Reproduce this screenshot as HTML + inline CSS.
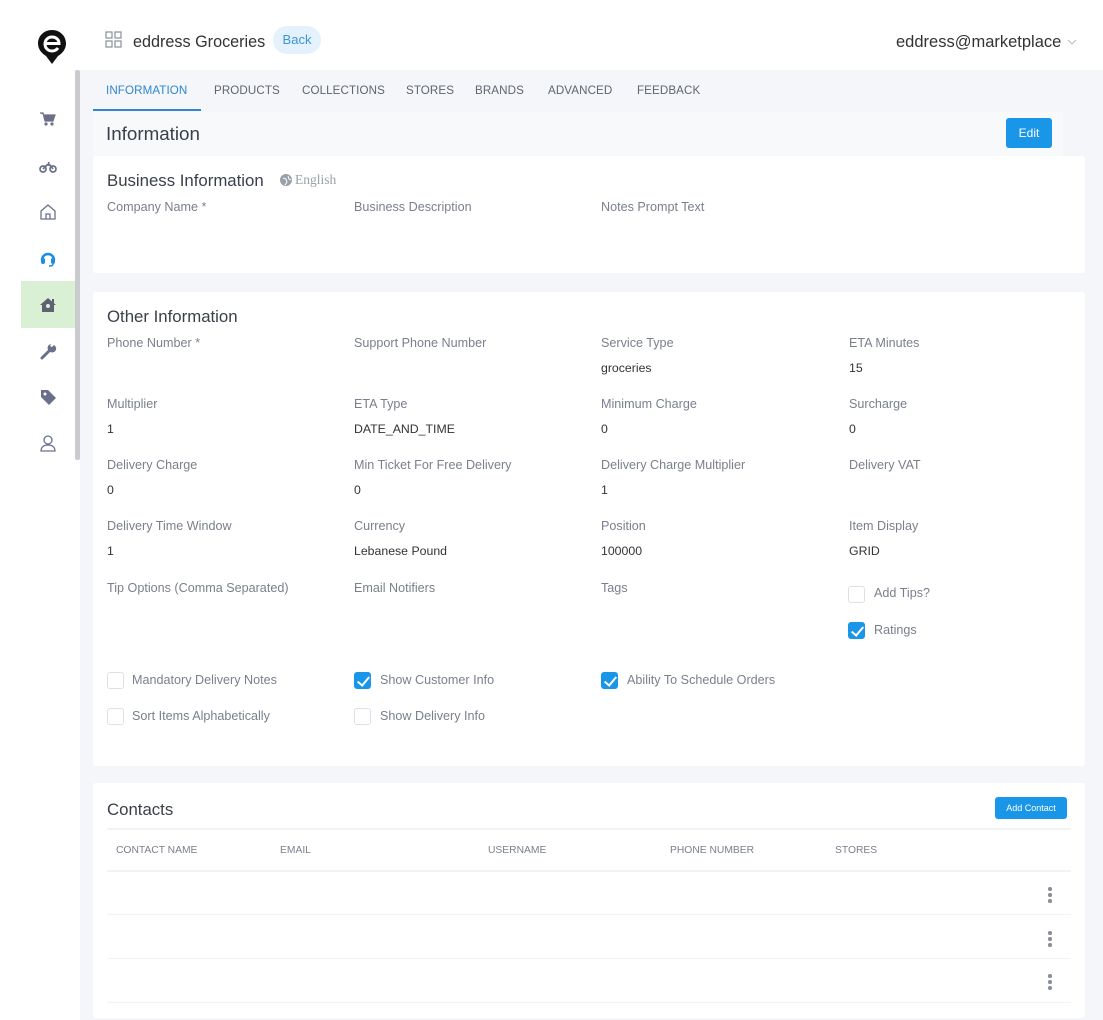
<!DOCTYPE html>
<html><head><meta charset="utf-8"><style>
*{box-sizing:border-box;margin:0;padding:0}
body{width:1103px;height:1020px;overflow:hidden;background:#f4f6f9;font-family:"Liberation Sans",sans-serif;position:relative;color:#333}
.a{position:absolute;white-space:nowrap}
.side{left:0;top:0;width:80px;height:1020px;background:#fff}
.hdr{left:80px;top:0;width:1023px;height:70px;background:#fff}
.tab{top:84px;font-size:11.6px;color:#5f6470;letter-spacing:.1px}
.card{background:#fff;border-radius:3px;left:93px;width:992px}
.lbl{font-size:12.6px;color:#7a7f8c}
.val{font-size:12.3px;color:#333}
.ttl{font-size:16.8px;color:#3a3f4a}
.cb{width:17px;height:17px;border:1px solid #dde1e7;border-radius:3px;background:#fff}
.cb.on{background:#1a96e8;border-color:#1a96e8}
.cb.on:after{content:"";position:absolute;left:5px;top:1px;width:5px;height:10px;border:solid #fff;border-width:0 2px 2px 0;transform:rotate(40deg)}
.th{font-size:10.3px;color:#7a7f8c;top:845px}
.line{height:2px;background:#f1f3f6;left:107px;width:964px}
.dots{left:1048px;width:4px}
.dots i{display:block;width:3.5px;height:3.5px;border-radius:50%;background:#8a8f9a;margin-bottom:2.5px}
.ic{left:38px;width:20px;height:20px}
</style></head><body>
<div class="a side"></div>
<div class="a" style="left:75px;top:70px;width:5px;height:390px;background:#c9cbcf;border-radius:2px"></div>
<svg class="a" style="left:37px;top:29px" width="30" height="36" viewBox="0 0 30 36"><path d="M15 1C7 1 1 7 1 14.5c0 6 4 10 8 12.5l6 8 6-8c4-2.5 8-6.5 8-12.5C29 7 23 1 15 1z" fill="#111"/><path d="M8 14.5h14c0-4-3-6.5-7-6.5s-7 3-7 7 3 7 7 7c2.5 0 4.5-1 6-3" stroke="#fff" stroke-width="3" fill="none"/></svg>
<div class="a" style="left:21px;top:281px;width:54px;height:47px;background:#d9f0d5"></div>
<svg class="a ic" style="top:109px" viewBox="0 0 20 20"><path d="M2 4h3l2 8h8l2-6H6" fill="#6a7089" stroke="#6a7089" stroke-width="1.2"/><circle cx="8" cy="15" r="1.6" fill="#6a7089"/><circle cx="14" cy="15" r="1.6" fill="#6a7089"/></svg>
<svg class="a ic" style="top:156px" viewBox="0 0 20 20"><circle cx="5" cy="13" r="3" stroke="#6a7089" stroke-width="1.7" fill="none"/><circle cx="15" cy="13" r="3" stroke="#6a7089" stroke-width="1.7" fill="none"/><path d="M5 13l4-4h3l3 4M10 9l1-3" stroke="#6a7089" stroke-width="1.7" fill="none"/></svg>
<svg class="a ic" style="top:202px" viewBox="0 0 20 20"><path d="M3 9l7-6 7 6v8H3z M8 17v-5h4v5" stroke="#6a7089" stroke-width="1.3" fill="none"/></svg>
<svg class="a ic" style="top:248px" viewBox="0 0 20 20"><path d="M4 12a6 6 0 0112 0" stroke="#1a8ee0" stroke-width="2.5" fill="none"/><rect x="3" y="10" width="4" height="6" rx="2" fill="#1a8ee0"/><rect x="13" y="10" width="4" height="6" rx="2" fill="#1a8ee0"/><path d="M15 16q0 2-4 2" stroke="#1a8ee0" stroke-width="1.5" fill="none"/></svg>
<svg class="a ic" style="top:295px" viewBox="0 0 20 20"><path d="M2 10l8-7 8 7h-2v7H4v-7z" fill="#5c6272"/><circle cx="10" cy="11" r="2" fill="#d9f0d5"/><rect x="14" y="4" width="2" height="4" fill="#5c6272"/></svg>
<svg class="a ic" style="top:341px" viewBox="0 0 20 20"><path d="M4 17l7-7" stroke="#6a7089" stroke-width="3" stroke-linecap="round"/><path d="M11 10a4 4 0 105-6l-2 2-2-1 1-2a4 4 0 00-2 7z" fill="#6a7089"/></svg>
<svg class="a ic" style="top:387px" viewBox="0 0 20 20"><path d="M3 3h7l8 8-7 7-8-8z" fill="#6a7089"/><circle cx="7" cy="7" r="1.5" fill="#fff"/></svg>
<svg class="a ic" style="top:433px" viewBox="0 0 20 20"><circle cx="10" cy="7" r="4" stroke="#6a7089" stroke-width="1.3" fill="none"/><path d="M3 18c0-4 3-6 7-6s7 2 7 6z" stroke="#6a7089" stroke-width="1.3" fill="none"/></svg>

<div class="a hdr"></div>
<svg class="a" style="left:105px;top:31px" width="17" height="17" viewBox="0 0 17 17"><g fill="none" stroke="#8a8f9a" stroke-width="1.2"><rect x="1" y="1" width="6" height="6"/><rect x="10" y="1" width="6" height="6"/><rect x="1" y="10" width="6" height="6"/><rect x="10" y="10" width="6" height="6"/></g></svg>
<div class="a" style="left:133px;top:33px;font-size:16.2px;color:#333">eddress Groceries</div>
<div class="a" style="left:273px;top:26px;width:48px;height:28px;border-radius:14px;background:#e3f2fc;color:#3b95d8;font-size:13px;text-align:center;line-height:28px">Back</div>
<div class="a" style="left:896px;top:33px;font-size:16.5px;color:#333">eddress@marketplace</div>
<svg class="a" style="left:1067px;top:39px" width="10" height="7"><path d="M1 1l4 4 4-4" stroke="#b8bcc4" fill="none"/></svg>

<div class="a tab" style="left:106px;color:#2f86cf">INFORMATION</div>
<div class="a" style="left:93px;top:109px;width:108px;height:2px;background:#2f86cf"></div>
<div class="a tab" style="left:214px">PRODUCTS</div>
<div class="a tab" style="left:302px">COLLECTIONS</div>
<div class="a tab" style="left:406px">STORES</div>
<div class="a tab" style="left:475px">BRANDS</div>
<div class="a tab" style="left:548px">ADVANCED</div>
<div class="a tab" style="left:637px">FEEDBACK</div>

<div class="a" style="left:93px;top:112px;width:970px;height:44px;background:#f8f9fb"></div>
<div class="a" style="left:106px;top:123px;font-size:18.8px;color:#3a3f4a">Information</div>
<div class="a" style="left:1006px;top:118px;width:46px;height:30px;background:#1a96e8;border-radius:3px;color:#fff;font-size:12px;text-align:center;line-height:30px">Edit</div>

<div class="a card" style="top:156px;height:117px"></div>
<div class="a ttl" style="left:107px;top:171px">Business Information</div>
<svg class="a" style="left:280px;top:174px" width="12" height="12"><circle cx="6" cy="6" r="6" fill="#9aa0aa"/><path d="M3 4l3 1 1 3-2 3M8 2l1 3 2 1" stroke="#fff" fill="none"/></svg>
<div class="a" style="left:295px;top:172px;font-size:13.5px;color:#9aa0aa;font-family:'Liberation Serif',serif">English</div>
<div class="a lbl" style="left:107px;top:200px">Company Name *</div>
<div class="a lbl" style="left:354px;top:200px">Business Description</div>
<div class="a lbl" style="left:601px;top:200px">Notes Prompt Text</div>

<div class="a card" style="top:292px;height:474px"></div>
<div class="a ttl" style="left:107px;top:307px">Other Information</div>

<div class="a lbl" style="left:107px;top:336px">Phone Number *</div>
<div class="a lbl" style="left:354px;top:336px">Support Phone Number</div>
<div class="a lbl" style="left:601px;top:336px">Service Type</div>
<div class="a val" style="left:601px;top:361px">groceries</div>
<div class="a lbl" style="left:849px;top:336px">ETA Minutes</div>
<div class="a val" style="left:849px;top:361px">15</div>

<div class="a lbl" style="left:107px;top:397px">Multiplier</div>
<div class="a val" style="left:107px;top:422px">1</div>
<div class="a lbl" style="left:354px;top:397px">ETA Type</div>
<div class="a val" style="left:354px;top:422px">DATE_AND_TIME</div>
<div class="a lbl" style="left:601px;top:397px">Minimum Charge</div>
<div class="a val" style="left:601px;top:422px">0</div>
<div class="a lbl" style="left:849px;top:397px">Surcharge</div>
<div class="a val" style="left:849px;top:422px">0</div>

<div class="a lbl" style="left:107px;top:458px">Delivery Charge</div>
<div class="a val" style="left:107px;top:483px">0</div>
<div class="a lbl" style="left:354px;top:458px">Min Ticket For Free Delivery</div>
<div class="a val" style="left:354px;top:483px">0</div>
<div class="a lbl" style="left:601px;top:458px">Delivery Charge Multiplier</div>
<div class="a val" style="left:601px;top:483px">1</div>
<div class="a lbl" style="left:849px;top:458px">Delivery VAT</div>

<div class="a lbl" style="left:107px;top:519px">Delivery Time Window</div>
<div class="a val" style="left:107px;top:544px">1</div>
<div class="a lbl" style="left:354px;top:519px">Currency</div>
<div class="a val" style="left:354px;top:544px">Lebanese Pound</div>
<div class="a lbl" style="left:601px;top:519px">Position</div>
<div class="a val" style="left:601px;top:544px">100000</div>
<div class="a lbl" style="left:849px;top:519px">Item Display</div>
<div class="a val" style="left:849px;top:544px">GRID</div>

<div class="a lbl" style="left:107px;top:581px">Tip Options (Comma Separated)</div>
<div class="a lbl" style="left:354px;top:581px">Email Notifiers</div>
<div class="a lbl" style="left:601px;top:581px">Tags</div>

<div class="a cb" style="left:848px;top:586px"></div><div class="a lbl" style="left:874px;top:586px">Add Tips?</div>
<div class="a cb on" style="left:848px;top:622px"></div><div class="a lbl" style="left:874px;top:623px">Ratings</div>

<div class="a cb" style="left:107px;top:672px"></div><div class="a lbl" style="left:132px;top:673px">Mandatory Delivery Notes</div>
<div class="a cb on" style="left:354px;top:672px"></div><div class="a lbl" style="left:380px;top:673px">Show Customer Info</div>
<div class="a cb on" style="left:601px;top:672px"></div><div class="a lbl" style="left:627px;top:673px">Ability To Schedule Orders</div>
<div class="a cb" style="left:107px;top:708px"></div><div class="a lbl" style="left:132px;top:709px">Sort Items Alphabetically</div>
<div class="a cb" style="left:354px;top:708px"></div><div class="a lbl" style="left:380px;top:709px">Show Delivery Info</div>

<div class="a card" style="top:783px;height:235px"></div>
<div class="a ttl" style="left:107px;top:800px">Contacts</div>
<div class="a" style="left:995px;top:797px;width:72px;height:22px;background:#1a96e8;border-radius:3px;color:#fff;font-size:9px;text-align:center;line-height:22px">Add Contact</div>
<div class="a line" style="top:828px"></div>
<div class="a th" style="left:116px">CONTACT NAME</div>
<div class="a th" style="left:280px">EMAIL</div>
<div class="a th" style="left:488px">USERNAME</div>
<div class="a th" style="left:670px">PHONE NUMBER</div>
<div class="a th" style="left:835px">STORES</div>
<div class="a line" style="top:870px"></div>
<div class="a dots" style="top:887px"><i></i><i></i><i></i></div>
<div class="a line" style="top:914px;height:1px"></div>
<div class="a dots" style="top:931px"><i></i><i></i><i></i></div>
<div class="a line" style="top:958px;height:1px"></div>
<div class="a dots" style="top:974px"><i></i><i></i><i></i></div>
<div class="a line" style="top:1002px;height:1px"></div>
</body></html>
